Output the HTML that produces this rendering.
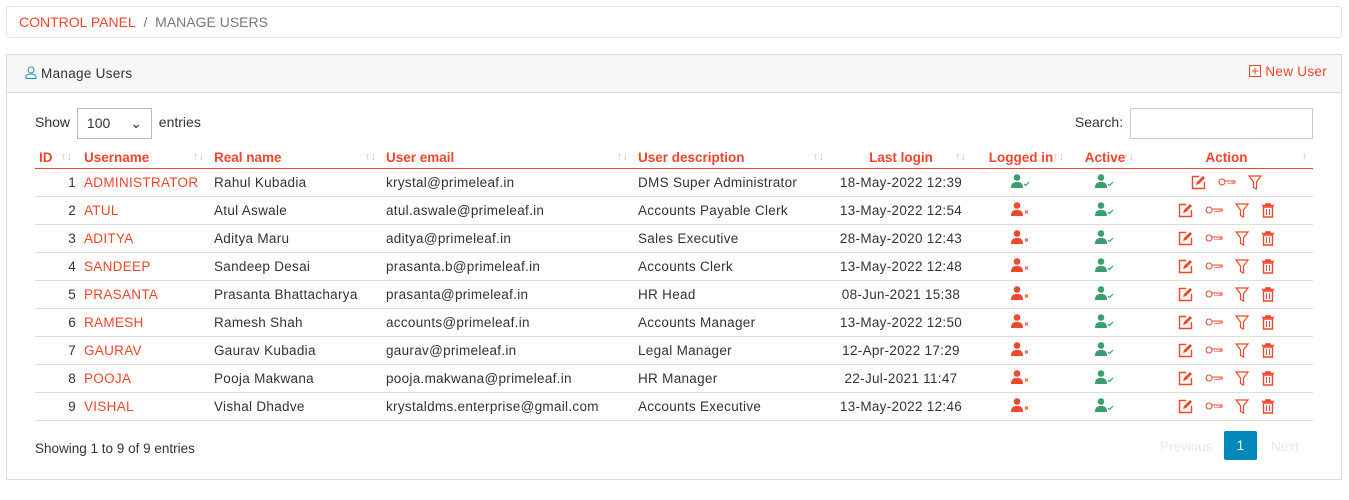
<!DOCTYPE html>
<html><head><style>
*{box-sizing:border-box}
body{margin:0;width:1349px;height:500px;background:#fff;font-family:"Liberation Sans",sans-serif;font-size:13.5px;letter-spacing:.3px;color:#333;position:relative;overflow:hidden}
.bc{position:absolute;left:6px;top:6px;width:1336px;height:32px;border:1px solid #e3e3e3;border-radius:3px;padding:7px 12px;font-size:14px;color:#777;letter-spacing:0}
.bc span{color:#f0462b}
.panel{position:absolute;left:6px;top:54px;width:1336px;height:426px;border:1px solid #ddd}
.ph{height:38px;background:#f7f7f7;border-bottom:1px solid #ddd;position:relative}
.ph .t{position:absolute;left:18px;top:11px}
.ph .n{position:absolute;right:14px;top:9px;color:#f0462b}
table{position:absolute;left:28px;top:92px;border-collapse:collapse;table-layout:fixed;width:1278px}
th{color:#f0462b;font-weight:bold;height:21px;text-align:left;padding:0 4px;border-bottom:1px solid #f0462b;position:relative;letter-spacing:0}
th i{position:absolute;right:6px;top:4px;color:#f4b5aa;font-style:normal;font-size:11px}
td{height:28px;padding:0 4px;border-bottom:1px solid #ddd}
td.u{color:#f0462b}
.c{text-align:center}
</style></head><body>
<div class="bc"><span>CONTROL PANEL</span>&nbsp; / &nbsp;MANAGE USERS</div>
<div class="panel">
<div class="ph"><div class="t"><svg width="12" height="13" viewBox="0 0 12 13" style="vertical-align:-1px"><circle cx="6" cy="4" r="3" fill="none" stroke="#2a8fc0"/><path d="M1 12.5v-1.5c0-2 2-3 5-3s5 1 5 3v1.5z" fill="none" stroke="#2a8fc0"/></svg> Manage Users</div>
<div class="n"><svg width="12" height="12" style="vertical-align:-1px"><rect x=".5" y=".5" width="11" height="11" fill="none" stroke="#f0462b"/><path d="M6 3v6M3 6h6" stroke="#f0462b"/></svg> New User</div></div>
<div style="position:absolute;left:28px;top:53px;font-size:14px;letter-spacing:0">Show <span style="display:inline-block;width:75px;height:31px;border:1px solid #bbb;vertical-align:middle;padding:6px 9px;margin:0 3px">100 <span style="float:right">&#8964;</span></span> entries</div>
<div style="position:absolute;right:28px;top:53px;font-size:14px;letter-spacing:0">Search: <span style="display:inline-block;width:183px;height:31px;border:1px solid #ccc;vertical-align:middle;margin-left:3px"></span></div>
<table>
<colgroup><col style="width:45px"><col style="width:130px"><col style="width:172px"><col style="width:252px"><col style="width:196px"><col style="width:142px"><col style="width:98px"><col style="width:70px"><col style="width:173px"></colgroup>
<tr><th>ID<i style="right:8px">↑↓</i></th><th>Username<i>↑↓</i></th><th>Real name<i>↑↓</i></th><th>User email<i>↑↓</i></th><th>User description<i>↑↓</i></th><th class="c">Last login<i>↑↓</i></th><th class="c">Logged in<i>↑↓</i></th><th class="c">Active<i>↑↓</i></th><th class="c">Action<i>↑</i></th></tr>
</table>
</div>
<div style="position:absolute;left:35px;top:441px;letter-spacing:0">Showing 1 to 9 of 9 entries</div>
<div style="position:absolute;left:1160px;top:439px;color:#e8e8e8;letter-spacing:0">Previous</div>
<div style="position:absolute;left:1224px;top:431px;width:33px;height:29px;background:#0088b8;border-radius:2px;color:#fff;text-align:center;line-height:29px">1</div>
<div style="position:absolute;left:1271px;top:439px;color:#e8e8e8;letter-spacing:0">Next</div>
<script>
const rows=[["ADMINISTRATOR","Rahul Kubadia","krystal@primeleaf.in","DMS Super Administrator","18-May-2022 12:39",1],
["ATUL","Atul Aswale","atul.aswale@primeleaf.in","Accounts Payable Clerk","13-May-2022 12:54",0],
["ADITYA","Aditya Maru","aditya@primeleaf.in","Sales Executive","28-May-2020 12:43",0],
["SANDEEP","Sandeep Desai","prasanta.b@primeleaf.in","Accounts Clerk","13-May-2022 12:48",0],
["PRASANTA","Prasanta Bhattacharya","prasanta@primeleaf.in","HR Head","08-Jun-2021 15:38",0],
["RAMESH","Ramesh Shah","accounts@primeleaf.in","Accounts Manager","13-May-2022 12:50",0],
["GAURAV","Gaurav Kubadia","gaurav@primeleaf.in","Legal Manager","12-Apr-2022 17:29",0],
["POOJA","Pooja Makwana","pooja.makwana@primeleaf.in","HR Manager","22-Jul-2021 11:47",0],
["VISHAL","Vishal Dhadve","krystaldms.enterprise@gmail.com","Accounts Executive","13-May-2022 12:46",0]];
const user=(c,m)=>`<svg width="20" height="14" viewBox="0 0 20 14"><circle cx="6" cy="3.5" r="3.3" fill="${c}"/><path d="M0 14c0-5 2.5-6 6-6s6 1 6 6z" fill="${c}"/>${m?'<path d="M13 10l1.5 1.5L18 8" stroke="#3a9e6e" fill="none" stroke-width="1.2"/>':'<path d="M14 8.5l3 3M17 8.5l-3 3" stroke="#e53" stroke-width="1.2"/>'}</svg>`;
const R="#f0462b";
const edit=`<svg width="15" height="15" viewBox="0 0 15 15"><path d="M8 1.5H1.5v12h12V7" fill="none" stroke="${R}" stroke-width="1.4"/><path d="M5 10l1-3 6-6 2 2-6 6z" fill="${R}"/></svg>`;
const key=`<svg width="18" height="10" viewBox="0 0 18 10"><circle cx="4" cy="5" r="3" fill="none" stroke="${R}"/><path d="M7 4h10v2H14v1M12 6v1M10 6v1" fill="none" stroke="${R}"/></svg>`;
const fil=`<svg width="14" height="15" viewBox="0 0 14 15"><path d="M1 1h12L8.5 7v7l-3-1.5V7z" fill="none" stroke="${R}" stroke-width="1.2"/></svg>`;
const del=`<svg width="14" height="15" viewBox="0 0 14 15"><path d="M1 2.5h12M5 2.5V1h4v1.5" stroke="${R}" stroke-width="1.6" fill="none"/><path d="M2.5 4h9v10h-9z" fill="none" stroke="${R}" stroke-width="1.4"/><path d="M5.5 6v6M8.5 6v6" stroke="${R}"/></svg>`;
let h="";
rows.forEach((r,i)=>{h+=`<tr><td style="text-align:right">${i+1}</td><td class="u">${r[0]}</td><td>${r[1]}</td><td>${r[2]}</td><td>${r[3]}</td><td class="c">${r[4]}</td><td class="c">${user(r[5]?"#3a9e6e":R,r[5])}</td><td class="c">${user("#3a9e6e",1)}</td><td class="c"><span style="display:inline-flex;gap:12px;align-items:center;vertical-align:middle">${edit}${key}${fil}${r[5]?"":del}</span></td></tr>`});
document.querySelector("table").insertAdjacentHTML("beforeend",h);
</script>
</body></html>
